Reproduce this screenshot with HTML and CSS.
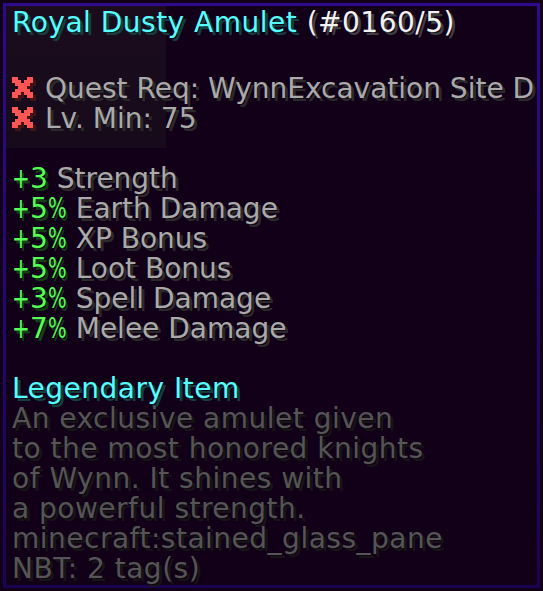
FILE: index.html
```html
<!DOCTYPE html>
<html>
<head>
    <title>Royal Dusty Amulet</title>
    <meta charset="UTF-8">
    <link rel="stylesheet" href="styles.css">
</head>
<body>
    <div class="tooltip">
        <div class="frame">
            <div class="content">
                <div class="line title"><span class="aqua">Royal Dusty Amulet</span><span class="white"> (#0160/5)</span></div>
                <div class="line"></div>
                <div class="line"><svg class="cross" viewBox="0 0 8 8" shape-rendering="crispEdges">
                    <path fill="#3f1515" d="M1 1h2v1h1v1h1v-1h1v-1h2v2h-1v1h-1v1h1v1h1v2h-2v-1h-1v-1h-1v1h-1v1h-2v-2h1v-1h1v-1h-1v-1h-1z"/>
                    <path fill="#ff5555" d="M0 0h2v1h1v1h1v-1h1v-1h2v2h-1v1h-1v1h1v1h1v2h-2v-1h-1v-1h-1v1h-1v1h-2v-2h1v-1h1v-1h-1v-1h-1z"/>
                </svg><span class="gray">Quest Req: WynnExcavation Site D</span></div>
                <div class="line"><svg class="cross" viewBox="0 0 8 8" shape-rendering="crispEdges">
                    <path fill="#3f1515" d="M1 1h2v1h1v1h1v-1h1v-1h2v2h-1v1h-1v1h1v1h1v2h-2v-1h-1v-1h-1v1h-1v1h-2v-2h1v-1h1v-1h-1v-1h-1z"/>
                    <path fill="#ff5555" d="M0 0h2v1h1v1h1v-1h1v-1h2v2h-1v1h-1v1h1v1h1v2h-2v-1h-1v-1h-1v1h-1v1h-2v-2h1v-1h1v-1h-1v-1h-1z"/>
                </svg><span class="gray">Lv. Min: 75</span></div>
                <div class="line"></div>
                <div class="line"><span class="green"><span class="plus">+</span>3</span><span class="gray"> Strength</span></div>
                <div class="line"><span class="green"><span class="plus">+</span>5<span class="pct">%</span></span><span class="gray"> Earth Damage</span></div>
                <div class="line"><span class="green"><span class="plus">+</span>5<span class="pct">%</span></span><span class="gray"> XP Bonus</span></div>
                <div class="line"><span class="green"><span class="plus">+</span>5<span class="pct">%</span></span><span class="gray"> Loot Bonus</span></div>
                <div class="line"><span class="green"><span class="plus">+</span>3<span class="pct">%</span></span><span class="gray"> Spell Damage</span></div>
                <div class="line"><span class="green"><span class="plus">+</span>7<span class="pct">%</span></span><span class="gray"> Melee Damage</span></div>
                <div class="line"></div>
                <div class="line aqua">Legendary Item</div>
                <div class="line dark">An exclusive amulet given</div>
                <div class="line dark">to the most honored knights</div>
                <div class="line dark">of Wynn. It shines with</div>
                <div class="line dark">a powerful strength.</div>
                <div class="line dark">minecraft:stained_glass_pane</div>
                <div class="line dark">NBT: 2 tag(s)</div>
            </div>
        </div>
    </div>
</body>
</html>
```

FILE: styles.css
```css
* {
    margin: 0;
    padding: 0;
    box-sizing: border-box;
}

body {
    background: #0c0010;
    font-family: 'DejaVu Sans', sans-serif;
}

.tooltip {
    width: 543px;
    height: 591px;
    padding: 3px;
    background: #110017;
}

.frame {
    height: 100%;
    border: 3px solid;
    border-image: linear-gradient(#2e0a8c, #1a0452) 1;
    /* faint inventory showing through the top-left corner */
    background: linear-gradient(#1a0c1d, #170a1b) no-repeat 0 0 / 160px 142px, #110017;
}

.content {
    padding: 2px 6px 0 6px;
}

.line {
    height: 30px;
    line-height: 30px;
    font-size: 28px;
    white-space: pre;
}

.title {
    margin-bottom: 6px;
}

.cross {
    width: 24px;
    height: 24px;
    vertical-align: top;
    margin-top: 3px;
    margin-right: 9px;
}

/* minecraft glyphs for + and % are narrower than the system font */
.plus {
    display: inline-block;
    width: 18px;
    transform: scaleX(0.76);
    transform-origin: 0 50%;
}

.pct {
    display: inline-block;
    width: 19px;
    transform: scaleX(0.7);
    transform-origin: 0 50%;
}

.aqua {
    color: #55ffff;
    text-shadow: 3px 3px 0 #153f3f;
    letter-spacing: 0.5px;
}

.white {
    color: #f2f2f2;
    text-shadow: 3px 3px 0 #3f3f3f;
    letter-spacing: 0.5px;
}

.gray {
    color: #aaaaaa;
    text-shadow: 3px 3px 0 #2a2a2a;
}

.green {
    color: #55ff55;
    text-shadow: 3px 3px 0 #153f15;
}

.dark {
    color: #555555;
    text-shadow: 3px 3px 0 #151515;
    letter-spacing: 0.5px;
}
```
